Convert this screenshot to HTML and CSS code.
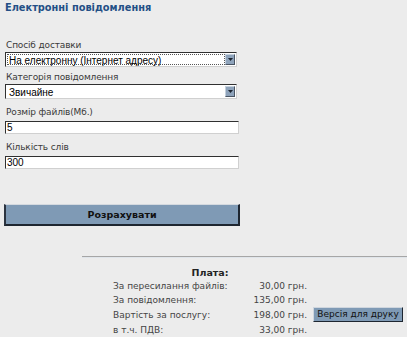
FILE: index.html
```html
<!DOCTYPE html>
<html lang="uk">
<head>
<meta charset="utf-8">
<link rel="stylesheet" href="styles.css">
</head>
<body>
<h1 class="title">Електронні повідомлення</h1>
<form class="form">
  <div class="field">
    <label class="label">Спосіб доставки</label>
    <div class="select focused"><span class="select-text">На електронну (Інтернет адресу)</span><span class="arrow"><svg width="5" height="3" viewBox="0 0 5 3"><path d="M0 0h5L2.5 3z" fill="#1c2430"/></svg></span></div>
  </div>
  <div class="field">
    <label class="label">Категорія повідомлення</label>
    <div class="select"><span class="select-text">Звичайне</span><span class="arrow"><svg width="5" height="3" viewBox="0 0 5 3"><path d="M0 0h5L2.5 3z" fill="#1c2430"/></svg></span></div>
  </div>
  <div class="field field-text">
    <label class="label">Розмір файлів(Мб.)</label>
    <input class="input" type="text" value="5">
  </div>
  <div class="field field-text">
    <label class="label">Кількість слів</label>
    <input class="input" type="text" value="300">
  </div>
  <button class="calc" type="button">Розрахувати</button>
</form>
<section class="result">
  <div class="grid">
    <div class="pay-title">Плата:</div>
    <div class="k">За пересилання файлів:</div><div class="v">30,00 грн.</div><div></div>
    <div class="k">За повідомлення:</div><div class="v">135,00 грн.</div><div></div>
    <div class="k tall">Вартість за послугу:</div><div class="v tall">198,00 грн.</div><div class="tall"><button class="print" type="button">Версія для друку</button></div>
    <div class="k">в т.ч. ПДВ:</div><div class="v">33,00 грн.</div><div></div>
  </div>
</section>
</body>
</html>
```
FILE: styles.css
```css
html, body {
  margin: 0;
  padding: 0;
  background: #ececec;
}
body {
  font-family: "DejaVu Sans", Verdana, sans-serif;
  font-size: 9px;
  color: #333;
  width: 407px;
  height: 337px;
  overflow: hidden;
}
.title {
  margin: 0;
  padding: 1px 0 0 5px;
  font-size: 9.8px;
  font-weight: bold;
  color: #234f86;
  line-height: 13px;
}
.form {
  padding: 25px 0 0 5px;
  width: 234px;
}
.field {
  display: flex;
  flex-direction: column;
  margin-bottom: 4px;
}
.field-text {
  margin-top: 7px;
}
.label {
  line-height: 12px;
  padding-left: 1px;
  margin-bottom: 1px;
  color: #3a3a3a;
  letter-spacing: -0.15px;
}
.field-text .label {
  margin-bottom: 3px;
}
.select {
  display: flex;
  width: 232px;
  height: 15px;
  box-sizing: border-box;
  background: #fff;
  border: 1px solid #303030;
  border-right-color: #d0d0d0;
  border-bottom-color: #d0d0d0;
  padding: 1px;
}
.select-text {
  flex: 1;
  font-family: "Liberation Sans", Arial, sans-serif;
  font-size: 10px;
  line-height: 11px;
  padding-left: 1px;
  color: #000;
  border: 1px dotted transparent;
}
.focused .select-text {
  border-color: #555;
}
.arrow {
  width: 10px;
  background: #8ea3bb;
  border: 1px solid #4a5563;
  border-top-color: #c4d0dc;
  border-left-color: #c4d0dc;
  display: flex;
  align-items: center;
  justify-content: center;
  box-sizing: border-box;
}
.input {
  height: 13px;
  box-sizing: border-box;
  width: 234px;
  margin: 0;
  padding: 0 0 0 1px;
  border: 1px solid #303030;
  border-right-color: #d0d0d0;
  border-bottom-color: #d0d0d0;
  font-family: "Liberation Sans", Arial, sans-serif;
  font-size: 10px;
  line-height: 11px;
  color: #000;
  background: #fff;
}
.calc {
  display: block;
  margin: 35px 0 0 -1px;
  width: 236px;
  height: 22px;
  box-sizing: border-box;
  background: #7f9ab5;
  border: 2px solid #1e2630;
  border-top: 1px solid #d4d9df;
  border-left-color: #2c3440;
  font-family: inherit;
  font-size: 9.5px;
  font-weight: bold;
  color: #111;
  padding: 0;
}
.result {
  margin: 30px 0 0 82px;
  border-top: 1px solid #a6a6a6;
  box-shadow: inset 0 1px 0 #e0e5ea;
  padding: 10px 0 0 31px;
}
.grid {
  display: grid;
  grid-template-columns: 130px 64px auto;
  align-items: center;
}
.pay-title {
  grid-column: 1 / 3;
  text-align: center;
  font-weight: bold;
  line-height: 12px;
  color: #222;
  font-size: 9.5px;
}
.k {
  grid-column: 1;
}
.k, .v {
  line-height: 14px;
  color: #444;
}
.tall {
  height: 16px;
  line-height: 16px;
}
.v {
  text-align: right;
}
.print {
  display: block;
  margin-left: 6px;
  width: 90px;
  height: 15px;
  padding: 0;
  background: #7f9ab5;
  border: 1px solid #1e2630;
  border-top-color: #cfd6de;
  border-left-color: #cfd6de;
  font-family: inherit;
  font-size: 9px;
  line-height: 13px;
  color: #111;
}
```
